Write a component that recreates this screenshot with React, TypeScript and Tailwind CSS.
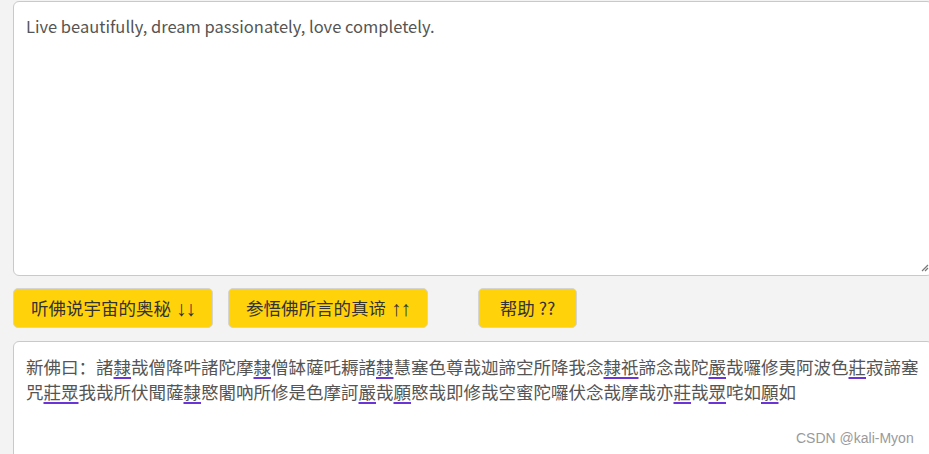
const line1 = [
  "新佛曰：諸",
  "@隸",
  "哉僧降吽諸陀摩",
  "@隸",
  "僧缽薩吒耨諸",
  "@隸",
  "慧塞色尊哉迦諦空所降我念",
  "@隸祇",
  "諦念哉陀",
  "@嚴",
  "哉囉修夷阿波色",
  "@莊",
  "寂諦塞",
];

const line2 = [
  "咒",
  "@莊眾",
  "我哉所伏聞薩",
  "@隸",
  "愍闍吶所修是色摩訶",
  "@嚴",
  "哉",
  "@願",
  "愍哉即修哉空蜜陀囉伏念哉摩哉亦",
  "@莊",
  "哉",
  "@眾",
  "咤如",
  "@願",
  "如",
];

function Marked({ parts }: { parts: string[] }) {
  return (
    <div className="whitespace-nowrap">
      {parts.map((p, i) =>
        p.startsWith("@") ? (
          <span
            key={i}
            className="underline decoration-[#6b34d6] decoration-[1.5px] underline-offset-[3px]"
          >
            {p.slice(1)}
          </span>
        ) : (
          <span key={i}>{p}</span>
        )
      )}
    </div>
  );
}

export default function App() {
  const font = "font-['Microsoft_YaHei','Noto_Sans_CJK_SC',sans-serif]";
  const arrow = "font-['Liberation_Sans',Arial,sans-serif] text-[21px] leading-none ml-[5px] tracking-[-1px]";
  const btn =
    "h-[40px] rounded-[5px] border border-[#d4d4d4] bg-[#ffd20a] text-[17.5px] text-[#333] flex items-center justify-center shrink-0 " +
    font;

  return (
    <div className="relative w-[929px] h-[454px] overflow-hidden bg-[#f3f3f3] pt-[1px] pl-[13px]">
      <div className="w-[920px]">
        {/* input box */}
        <div
          className={`relative h-[275px] rounded-[6px] border border-[#c9c9c9] bg-white px-[12px] pt-[12px] text-[16.5px] leading-[25px] text-[#555] ${font}`}
        >
          Live beautifully, dream passionately, love completely.
          <svg
            className="absolute right-[3px] bottom-[3px]"
            width="8"
            height="8"
            viewBox="0 0 8 8"
          >
            <path d="M7 1 L1 7 M7 4 L4 7" stroke="#777" strokeWidth="1.2" />
          </svg>
        </div>

        {/* buttons */}
        <div className="flex mt-[12px]">
          <button className={`${btn} w-[200px]`}>
            听佛说宇宙的奥秘<span className={arrow}>↓↓</span>
          </button>
          <button className={`${btn} w-[200px] ml-[15px]`}>
            参悟佛所言的真谛<span className={arrow}>↑↑</span>
          </button>
          <button className={`${btn} w-[99px] ml-[50px]`}>帮助 ??</button>
        </div>

        {/* output box */}
        <div
          className={`mt-[13px] h-[200px] rounded-[6px] border border-[#c9c9c9] bg-white px-[12px] pt-[12px] text-[17.5px] leading-[25px] text-[#555] ${font}`}
        >
          <Marked parts={line1} />
          <Marked parts={line2} />
        </div>
      </div>

      <span className="absolute left-[796px] top-[428px] font-['Liberation_Sans',Arial,sans-serif] text-[14px] text-[#9a9a9a] whitespace-nowrap">
        CSDN @kali-Myon
      </span>
    </div>
  );
}
